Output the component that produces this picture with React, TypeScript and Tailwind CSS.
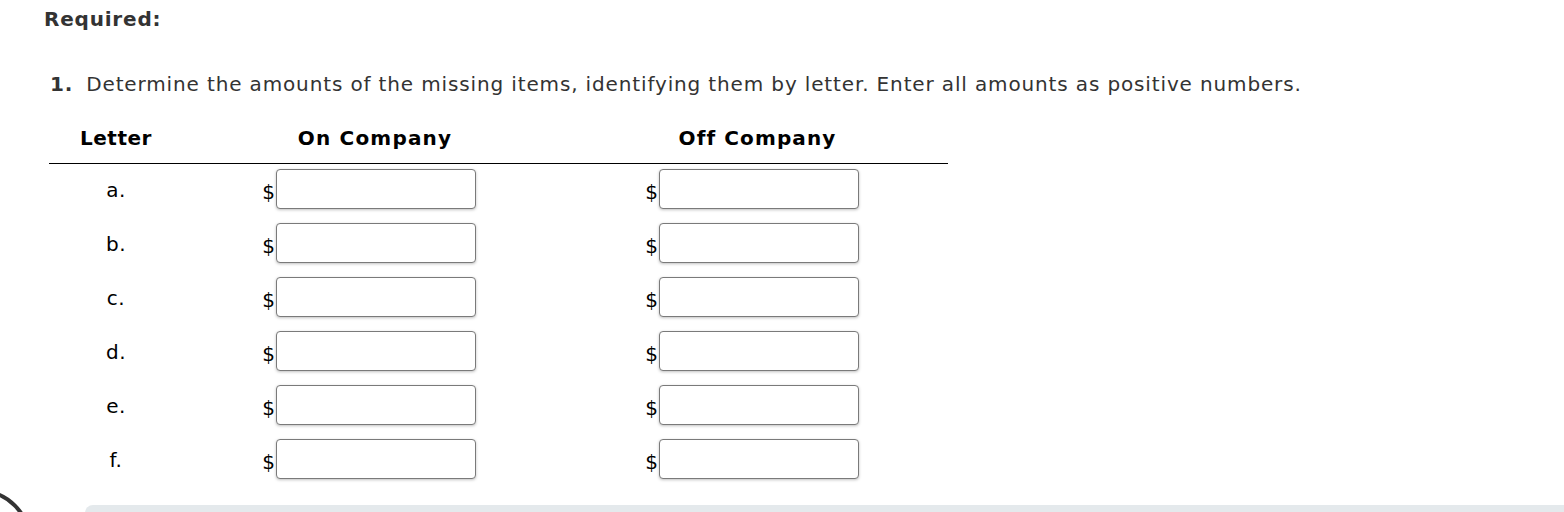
import React from "react";

const letters = ["a.", "b.", "c.", "d.", "e.", "f."];

function Field() {
  return (
    <div className="flex items-center">
      <span className="text-[20px] leading-[24px] text-black mt-[5px]">$</span>
      <div className="ml-[1px] w-[200px] h-[40px] rounded-[4px] border border-[#7a7a7a] bg-white shadow-[0_1px_3px_rgba(0,0,0,0.25)]" />
    </div>
  );
}

export default function App() {
  return (
    <div
      className="relative h-[512px] w-[1564px] overflow-hidden bg-white"
      style={{ fontFamily: "Verdana, 'DejaVu Sans', sans-serif" }}
    >
      <div className="pl-[44px] pt-[7px] text-[20px] leading-[24px] font-bold tracking-[0.8px] text-[#333]">Required:</div>
      <div className="mt-[41px] pl-[50px] text-[20px] leading-[24px] tracking-[0.86px] text-[#333]">
        <span className="font-bold">1.</span>
        <span className="ml-[13px]">
          Determine the amounts of the missing items, identifying them by letter. Enter all amounts as positive numbers.
        </span>
      </div>
      <div className="ml-[49px] mt-[30px] w-[899px]">
        <div className="grid grid-cols-[134px_384px_381px] border-b border-black pb-[13px] text-[20px] leading-[24px] font-bold text-black">
          <div className="text-center tracking-[0.5px]">Letter</div>
          <div className="text-center tracking-[1.2px]">On Company</div>
          <div className="text-center tracking-[1.1px]">Off Company</div>
        </div>
        <div className="flex flex-col gap-[14px] pt-[5px]">
          {letters.map((l) => (
            <div key={l} className="grid h-[40px] grid-cols-[134px_384px_381px] items-center">
              <div className="mt-[2px] text-center text-[20px] leading-[24px] tracking-[0.5px] text-black">{l}</div>
              <div className="flex justify-center pr-[12px]">
                <Field />
              </div>
              <div className="flex justify-center pr-[11px]">
                <Field />
              </div>
            </div>
          ))}
        </div>
      </div>
      <div className="absolute left-[-71px] top-[489px] h-[102px] w-[102px] rounded-full border-[4px] border-[#333]" />
      <div className="absolute left-[85px] right-0 top-[505px] h-[20px] rounded-tl-[8px] bg-[#e4e9ec]" />
    </div>
  );
}
